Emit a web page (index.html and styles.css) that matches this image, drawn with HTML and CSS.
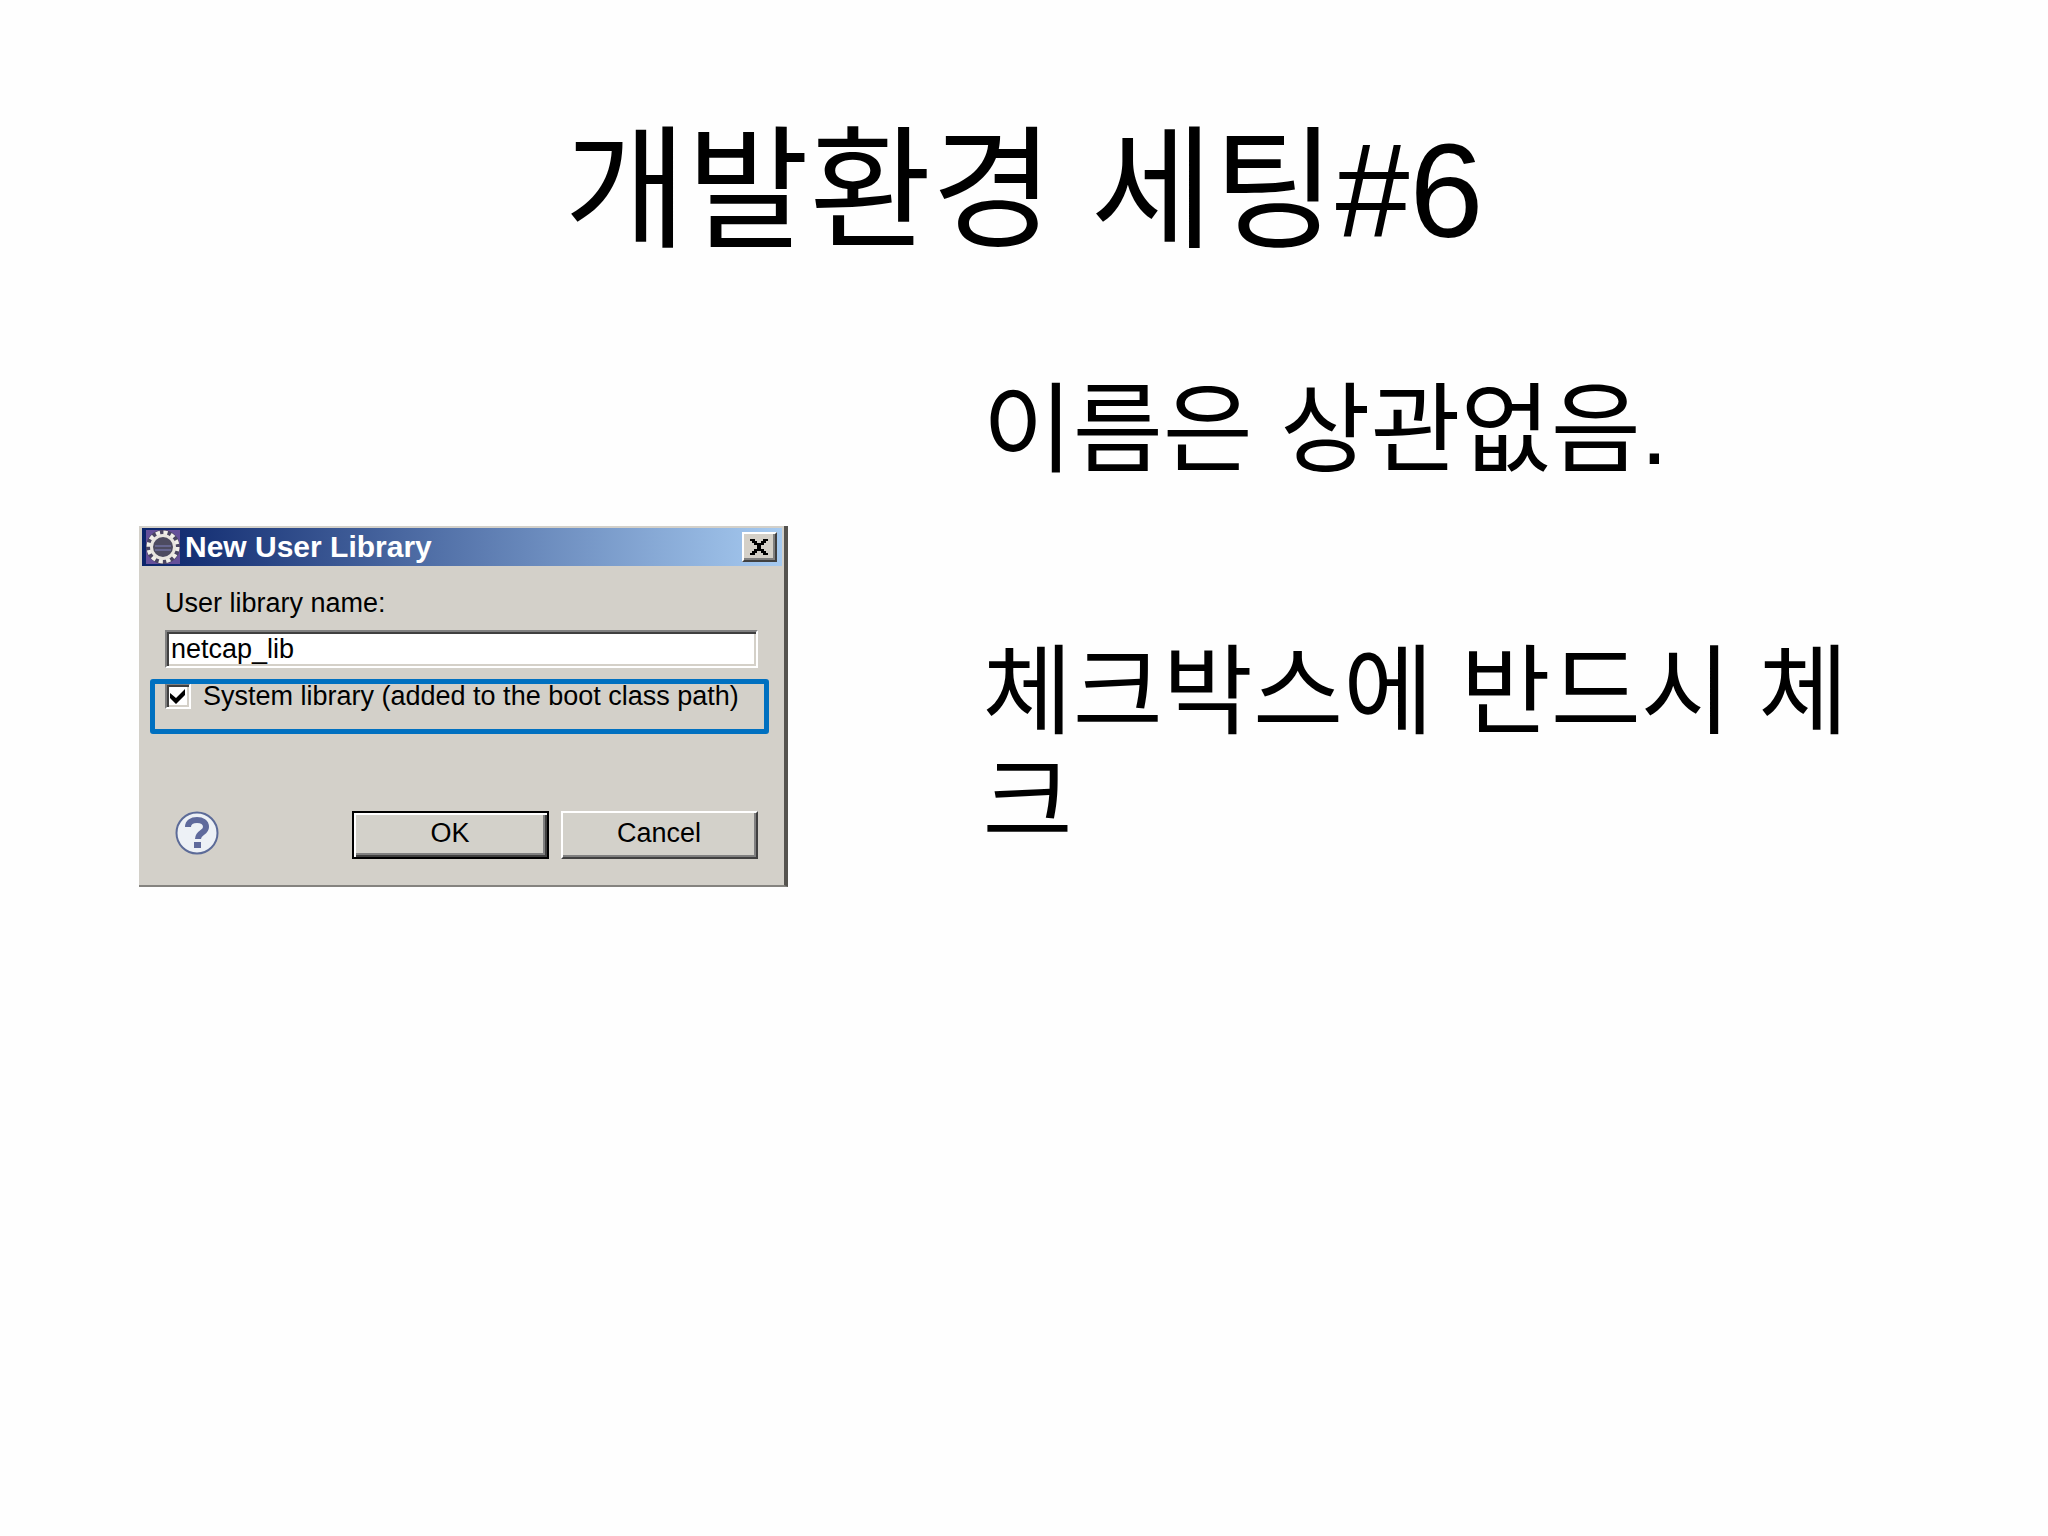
FILE: index.html
```html
<!DOCTYPE html>
<html lang="ko">
<head>
  <meta charset="UTF-8">
  <meta name="viewport" content="width=device-width, initial-scale=1.0">
  <title>개발환경 세팅#6</title>
  <link rel="stylesheet" href="styles.css">
</head>
<body>
  <main class="slide">
    <h1>개발환경 세팅#6</h1>

    <div class="content">
      <form class="dialog">
        <div class="titlebar">
          <svg class="app-icon" viewBox="0 0 34 34" aria-hidden="true">
            <rect width="34" height="34" fill="#65509a"/>
            <circle cx="17" cy="17" r="14" fill="none" stroke="#4b4663" stroke-width="6"/>
            <circle cx="17" cy="17" r="14" fill="none" stroke="#f1efe9" stroke-width="5" stroke-dasharray="4 3.33"/>
            <circle cx="17" cy="17" r="11.5" fill="#4d4b60" stroke="#e8e5df" stroke-width="3"/>
            <path d="M9 16h16M9 20h16" stroke="#66668f" stroke-width="2"/>
          </svg>
          <h2>New User Library</h2>
          <button type="button" class="close" aria-label="Close">
            <svg viewBox="0 0 18 16" aria-hidden="true">
              <path d="M0 0h5v2h2v2h4V2h2V0h5v2h-2v2h-2v2h-3v4h3v2h2v2h2v2h-5v-2h-2v-2H7v2H5v2H0v-2h2v-2h2v-2h3V6H4V4H2V2H0z"/>
            </svg>
          </button>
        </div>

        <div class="fields">
          <label for="libName">User library name:</label>
          <input type="text" id="libName" class="name" value="netcap_lib">
          <div class="check-row">
            <input type="checkbox" id="systemLib" class="check" checked>
            <label for="systemLib">System library (added to the boot class path)</label>
            <span class="highlight"></span>
          </div>
        </div>

        <div class="actions">
          <button type="button" class="help" aria-label="Help">
            <svg viewBox="0 0 44 44" aria-hidden="true">
              <circle cx="22" cy="22" r="20.5" fill="#edf1f6" stroke="#5c6b98" stroke-width="2"/>
              <path d="M13 16c0-5 4-7 9-7s9 2 9 7c0 6-8 5-8 12" fill="none" stroke="#5f6a9c" stroke-width="6"/>
              <rect x="19" y="31" width="7" height="6" fill="#5f6a9c"/>
            </svg>
          </button>
          <button type="button" class="btn btn-default">OK</button>
          <button type="button" class="btn">Cancel</button>
        </div>
      </form>

      <div class="notes">
        <p>이름은 상관없음.</p>
        <p>체크박스에 반드시 체크</p>
      </div>
    </div>
  </main>
</body>
</html>
```

FILE: styles.css
```css
* {
  box-sizing: border-box;
}
body {
  font-family: "Liberation Sans", "Noto Sans CJK KR", sans-serif;
  background-color: #fefefe;
  color: #000;
  margin: 0;
}
.slide {
  padding: 91px 139px;
}
h1 {
  margin: 0;
  font-size: 133px;
  font-weight: normal;
  line-height: 200px;
  text-align: center;
}
.content {
  display: grid;
  grid-template-columns: 7fr 10fr;
  gap: 195px;
  align-items: start;
  margin-top: 84px;
}

/* dialog window */
.dialog {
  margin-top: 151px;
  padding: 2px 2px 0 3px;
  background-color: #d3d0c9;
  border-right: 4px solid #55534f;
  border-bottom: 2px solid #85837f;
  font-size: 27px;
  line-height: 32px;
}
.titlebar {
  display: flex;
  align-items: center;
  height: 38px;
  padding: 0 5px 0 4px;
  background: linear-gradient(to right, #0a246a, #a6caf0);
}
.app-icon {
  width: 34px;
  height: 34px;
}
.titlebar h2 {
  flex: 1;
  margin: 0 0 0 5px;
  color: #fff;
  font-size: 30px;
  line-height: 36px;
}
.close {
  display: flex;
  align-items: center;
  justify-content: center;
  width: 35px;
  height: 30px;
  padding: 0;
  background-color: #d4d0c8;
  border: 2px solid;
  border-color: #fff #404040 #404040 #fff;
  box-shadow: inset -2px -2px #808080;
}
.close svg {
  width: 18px;
  height: 16px;
}
.fields {
  display: flex;
  flex-direction: column;
  padding: 21px 24px 0 23px;
}
.name {
  width: 100%;
  height: 38px;
  margin-top: 11px;
  padding: 0 4px;
  background-color: #fff;
  border: 2px solid;
  border-color: #808080 #fff #fff #808080;
  box-shadow: inset 2px 2px #404040, inset -2px -2px #d4d0c8;
  color: #000;
  font: inherit;
}
.check-row {
  position: relative;
  display: flex;
  align-items: center;
  height: 32px;
  margin-top: 12px;
  white-space: nowrap;
}
.check {
  appearance: none;
  width: 26px;
  height: 26px;
  margin: 0 12px 0 0;
  background: #fff url("data:image/svg+xml,%3Csvg xmlns='http://www.w3.org/2000/svg' viewBox='0 0 22 22'%3E%3Cpath d='M3 8l6 5 9-9v6l-9 9-6-6z'/%3E%3C/svg%3E");
  border: 2px solid;
  border-color: #808080 #fff #fff #808080;
  box-shadow: inset 2px 2px #404040, inset -2px -2px #d4d0c8;
}
.highlight {
  position: absolute;
  inset: -1px -11px -22px -15px;
  border: 5px solid #0070c0;
  border-radius: 3px;
  pointer-events: none;
}
.actions {
  display: flex;
  align-items: flex-start;
  gap: 12px;
  padding: 99px 24px 26px 33px;
}
.help {
  width: 44px;
  height: 44px;
  margin-right: auto;
  padding: 0;
  background: none;
  border: 0;
}
.help svg {
  display: block;
}
.btn {
  width: 197px;
  height: 48px;
  padding: 0 0 4px;
  background-color: #d3d1ca;
  border: 2px solid;
  border-color: #fff #404040 #404040 #fff;
  box-shadow: inset -2px -2px #808080;
  color: #000;
  font: inherit;
}
.btn-default {
  border-color: #000;
  box-shadow: inset 2px 2px #fff, inset -2px -2px #404040, inset -4px -4px #808080;
}

/* text next to the dialog */
.notes {
  font-size: 98px;
  line-height: 110px;
}
.notes p {
  margin: 0 0 152px;
}
```
